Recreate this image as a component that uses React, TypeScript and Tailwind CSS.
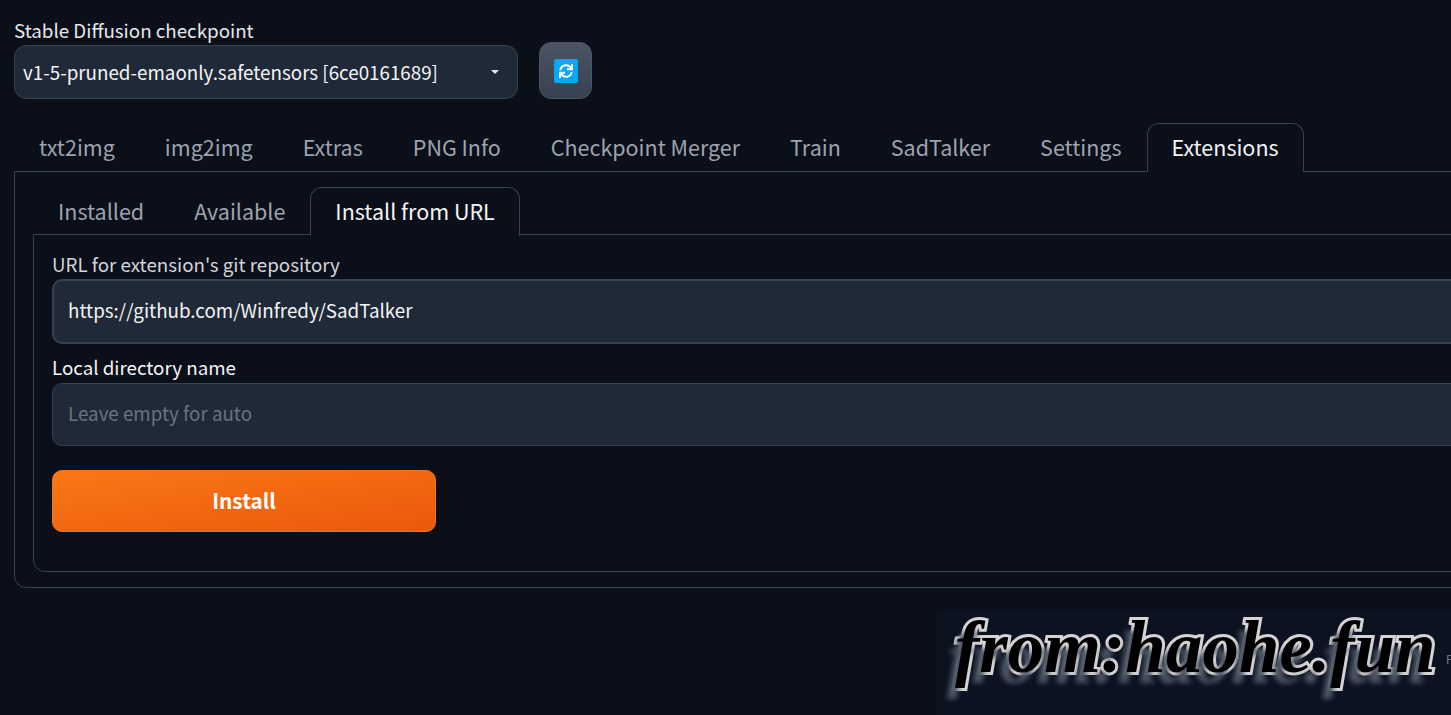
import { FaSync } from 'react-icons/fa';

const mainTabs = ['txt2img', 'img2img', 'Extras', 'PNG Info', 'Checkpoint Merger', 'Train', 'SadTalker', 'Settings'];
const subTabs = ['Installed', 'Available'];

function Tab({ label, active }: { label: string; active?: boolean }) {
  if (active) {
    return (
      <div className="relative z-10 -mb-px flex h-[49px] items-center rounded-t-xl border border-b-0 border-[#374151] bg-[#0b0f19] px-[24px] pb-[2px] text-[#f3f4f6]">
        {label}
      </div>
    );
  }
  return <div className="flex h-[48px] items-center px-[25px] text-[#9ca3af]">{label}</div>;
}

export default function App() {
  return (
    <div className="relative h-[715px] w-[1451px] overflow-hidden bg-[#0b0f19] pl-[14px] pt-[20px] font-['Noto_Sans_CJK_SC',sans-serif] text-[21.5px] leading-[28px]">
      <div className="flex items-end gap-[21px]">
        <div className="w-[504px]">
          <div className="mb-[3px] h-[22px] text-[18.75px] leading-[20px] text-[#e5e7eb]">Stable Diffusion checkpoint</div>
          <div className="flex h-[54px] items-center justify-between rounded-xl border border-[#374151] bg-[#1f2937] pb-[1px] pl-[8px] pr-[18px] text-[18.8px] text-[#f3f4f6]">
            <span>v1-5-pruned-emaonly.safetensors [6ce0161689]</span>
            <span className="h-0 w-0 border-x-[4px] border-t-[4px] border-x-transparent border-t-[#e5e7eb]" />
          </div>
        </div>
        <div className="flex h-[57px] w-[53px] items-center justify-center rounded-xl border border-[#4b5563] bg-gradient-to-b from-[#4b5563] to-[#374151]">
          <div className="flex h-[24px] w-[24px] items-center justify-center rounded-[2px] bg-[#03a9f4]">
            <FaSync size={14} className="text-white" />
          </div>
        </div>
      </div>

      <div className="mt-[24px] w-[1500px]">
        <div className="flex items-end">
          {mainTabs.map((t) => (
            <Tab key={t} label={t} />
          ))}
          <Tab label="Extensions" active />
        </div>
        <div className="h-[417px] rounded-b-xl border border-[#374151] px-[18px] pt-[15px]">
          <div className="flex items-end">
            {subTabs.map((t) => (
              <Tab key={t} label={t} />
            ))}
            <Tab label="Install from URL" active />
          </div>
          <div className="-mt-px h-[338px] rounded-b-xl border border-[#374151] px-[18px] pt-[18px]">
            <div className="mb-[2px] h-[24px] text-[18.75px] leading-[22px] text-[#d1d5db]">URL for extension's git repository</div>
            <div className="flex h-[65px] items-center rounded-[10px] border-2 border-[#374151] bg-[#1f2937] px-[14px] pb-[4px] text-[18.8px] text-[#f3f4f6]">
              https://github.com/Winfredy/SadTalker
            </div>
            <div className="mb-[3px] mt-[12px] h-[24px] text-[18.75px] leading-[22px] text-[#f3f4f6]">Local directory name</div>
            <div className="flex h-[63px] items-center rounded-[10px] border border-[#374151] bg-[#1f2937] px-[15px] pb-[4px] text-[18.8px] text-[#6b7280]">
              Leave empty for auto
            </div>
            <div className="mt-[24px] flex h-[62px] w-[384px] items-center justify-center rounded-[10px] border border-[#f97316] bg-gradient-to-br from-[#fa7716] to-[#ea580c] pb-[2px] text-[20.8px] font-semibold text-white">
              Install
            </div>
          </div>
        </div>
      </div>

      {/* watermark over the page corner */}
      <div className="absolute left-[937px] top-[610px] h-[105px] w-[514px] whitespace-nowrap bg-[#0c1220] pl-[18px] font-['Liberation_Serif',serif] text-[73px] font-bold italic leading-[76px] text-black [-webkit-text-stroke:6px_#d4d4d4] [paint-order:stroke_fill] [text-shadow:-8px_11px_5px_#4b5563]">
        from:haohe.fun
      </div>
      <div className="absolute left-[1446px] top-[652px] font-['Liberation_Sans',sans-serif] text-[13px] leading-[16px] text-[#6b7280]">R</div>
    </div>
  );
}
